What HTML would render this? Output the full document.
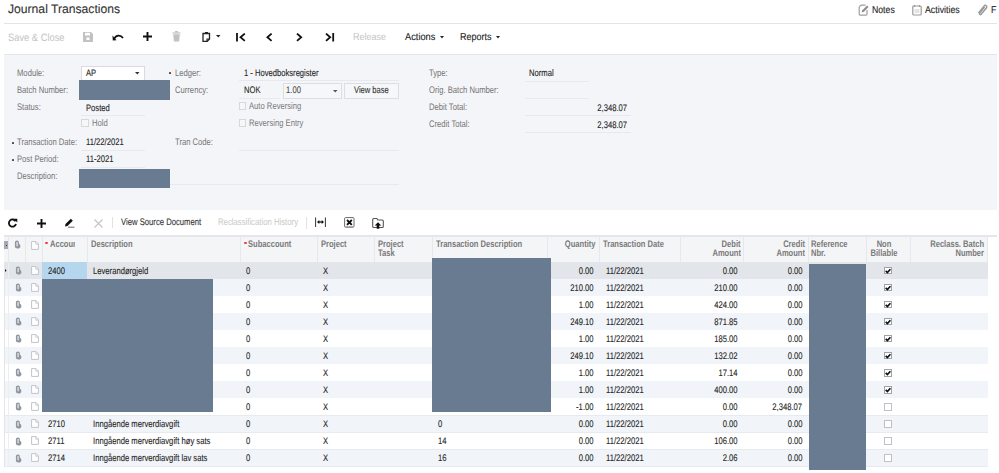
<!DOCTYPE html><html><head><meta charset="utf-8"><style>
html,body{margin:0;padding:0;}
body{width:999px;height:473px;overflow:hidden;position:relative;background:#fff;font-family:"Liberation Sans",sans-serif;text-rendering:geometricPrecision;}
.t{position:absolute;white-space:nowrap;line-height:1;transform-origin:0 0;}
.t.r{transform-origin:100% 0;text-align:right;}
.t.c{transform-origin:50% 0;text-align:center;}
.b{position:absolute;}
</style></head><body>
<div class="t" style="left:8.00px;top:3.08px;font-size:12.4px;color:#333;font-weight:normal;transform:scale(0.98,1.0);-webkit-text-stroke:0.1px currentColor;transform-origin:0 10.50px">Journal Transactions</div>
<div class="b" style="left:4.00px;top:23.00px;width:993.00px;height:1.00px;background:#e2e4e7;"></div>
<div class="t" style="left:871.60px;top:5.95px;font-size:10px;color:#222;font-weight:normal;transform:scale(0.87,1.0);-webkit-text-stroke:0.1px currentColor;transform-origin:0 8.46px">Notes</div>
<div class="t" style="left:925.00px;top:5.95px;font-size:10px;color:#222;font-weight:normal;transform:scale(0.88,1.0);-webkit-text-stroke:0.1px currentColor;transform-origin:0 8.46px">Activities</div>
<div class="t" style="left:991.00px;top:5.95px;font-size:10px;color:#222;font-weight:normal;transform:scale(0.88,1.0);-webkit-text-stroke:0.1px currentColor;transform-origin:0 8.46px">F</div>
<svg class="b" style="left:858px;top:4px" width="11" height="12" viewBox="0 0 11 12"><path d="M3 1.2h4.5M1.2 3v7.3a0.8 0.8 0 0 0 0.8 0.8h6.2a0.8 0.8 0 0 0 0.8-0.8v-4.3M1.2 3l1.8-1.8" fill="none" stroke="#a0a0a0" stroke-width="1.2"/><path d="M3.6 8.6l0.8-2.4 4.6-4.8 1.5 1.5-4.6 4.8z" fill="#8a8a8a"/></svg>
<svg class="b" style="left:912px;top:4px" width="10" height="12" viewBox="0 0 10 12"><rect x="0.8" y="2" width="8.4" height="9" rx="1" fill="none" stroke="#9a9a9a" stroke-width="1.2"/><path d="M2.5 1v2M7.5 1v2" stroke="#9a9a9a" stroke-width="1.2"/><path d="M2.5 6h5M2.5 8h5" stroke="#bbb" stroke-width="0.8"/></svg>
<svg class="b" style="left:977px;top:4px" width="11" height="12" viewBox="0 0 11 12"><path d="M2.5 10 L8.5 2.5 a1.6 1.6 0 0 1 2.2 2 L5 11.5 a1 1 0 0 1-1.5-1.2 L8.5 4" fill="none" stroke="#9a9a9a" stroke-width="1.5" transform="translate(-1,-1)"/></svg>
<div class="t" style="left:7.50px;top:32.61px;font-size:10.6px;color:#c4c4c4;font-weight:normal;transform:scale(0.88,1.0);transform-origin:0 8.97px">Save &amp; Close</div>
<svg class="b" style="left:83px;top:32px" width="10" height="10" viewBox="0 0 10 10"><path d="M0 0h8l2 2v8H0z" fill="#c2c2c2"/><rect x="2" y="0.8" width="5" height="2.7" fill="#fff"/><rect x="3.5" y="5.5" width="3" height="2.5" fill="#fff"/></svg>
<svg class="b" style="left:112px;top:33px" width="12" height="8" viewBox="0 0 12 8"><path d="M2.5 5.5 C4 2 8.5 1.5 11 5" fill="none" stroke="#111" stroke-width="1.8"/><path d="M0.5 2.5 L4.5 7.2 L0.8 7.5 z" fill="#111"/></svg>
<svg class="b" style="left:143px;top:32px" width="9" height="9" viewBox="0 0 9 9"><path d="M4.5 0v9M0 4.5h9" stroke="#111" stroke-width="1.9"/></svg>
<svg class="b" style="left:172px;top:31px" width="9" height="11" viewBox="0 0 9 11"><path d="M0.5 2h8" stroke="#c2c2c2" stroke-width="1.2"/><rect x="3" y="0" width="3" height="1.5" fill="#c2c2c2"/><path d="M1.2 3.2h6.6l-0.7 7.3H1.9z" fill="#c2c2c2"/></svg>
<svg class="b" style="left:202px;top:31px" width="9" height="11" viewBox="0 0 9 11"><path d="M1 2.5h6.5v5.5l-2.5 2.5H1z" fill="none" stroke="#222" stroke-width="1.3"/><rect x="3" y="1" width="3" height="2" fill="#222"/><path d="M5 10.5v-2.5h2.5" fill="none" stroke="#222" stroke-width="1.1"/></svg>
<svg class="b" style="left:215.5px;top:35px" width="5" height="3" viewBox="0 0 5 3"><path d="M0 0h4.5L2.25 2.5z" fill="#222"/></svg>
<svg class="b" style="left:236px;top:33px" width="10" height="9" viewBox="0 0 10 9"><path d="M1 0v8.5" stroke="#111" stroke-width="1.8"/><path d="M8.8 0.6L4.5 4.25 8.8 7.9" fill="none" stroke="#111" stroke-width="1.8"/></svg>
<svg class="b" style="left:266px;top:33px" width="7" height="9" viewBox="0 0 7 9"><path d="M5.6 0.6L1.4 4.25 5.6 7.9" fill="none" stroke="#111" stroke-width="1.8"/></svg>
<svg class="b" style="left:296px;top:33px" width="7" height="9" viewBox="0 0 7 9"><path d="M1 0.6L5.2 4.25 1 7.9" fill="none" stroke="#111" stroke-width="1.8"/></svg>
<svg class="b" style="left:325px;top:33px" width="10" height="9" viewBox="0 0 10 9"><path d="M1 0.6L5.2 4.25 1 7.9" fill="none" stroke="#111" stroke-width="1.8"/><path d="M8.2 0v8.5" stroke="#111" stroke-width="1.8"/></svg>
<div class="t" style="left:353.30px;top:33.15px;font-size:10px;color:#c4c4c4;font-weight:normal;transform:scale(0.9,1.0);transform-origin:0 8.46px">Release</div>
<div class="t" style="left:405.20px;top:33.15px;font-size:10px;color:#222;font-weight:normal;transform:scale(0.927,1.0);-webkit-text-stroke:0.1px currentColor;transform-origin:0 8.46px">Actions</div>
<svg class="b" style="left:440px;top:36px" width="4" height="3" viewBox="0 0 4 3"><path d="M0 0h4L2 2.5z" fill="#222"/></svg>
<div class="t" style="left:459.50px;top:33.15px;font-size:10px;color:#222;font-weight:normal;transform:scale(0.9,1.0);-webkit-text-stroke:0.1px currentColor;transform-origin:0 8.46px">Reports</div>
<svg class="b" style="left:496px;top:36px" width="4" height="3" viewBox="0 0 4 3"><path d="M0 0h4L2 2.5z" fill="#222"/></svg>
<div class="b" style="left:4.00px;top:54.00px;width:993.00px;height:1.00px;background:#e4e6e9;"></div>
<div class="b" style="left:4.00px;top:55.00px;width:993.00px;height:155.00px;background:#f4f5f8;"></div>
<div class="t" style="left:17.30px;top:68.66px;font-size:9px;color:#747474;font-weight:normal;transform:scale(0.85,1.06);transform-origin:0 7.62px">Module:</div>
<div class="t" style="left:17.30px;top:85.86px;font-size:9px;color:#747474;font-weight:normal;transform:scale(0.85,1.06);transform-origin:0 7.62px">Batch Number:</div>
<div class="t" style="left:17.30px;top:102.86px;font-size:9px;color:#747474;font-weight:normal;transform:scale(0.85,1.06);transform-origin:0 7.62px">Status:</div>
<div class="t" style="left:17.40px;top:138.16px;font-size:9px;color:#747474;font-weight:normal;transform:scale(0.85,1.06);transform-origin:0 7.62px">Transaction Date:</div>
<div class="t" style="left:17.40px;top:154.85px;font-size:9px;color:#747474;font-weight:normal;transform:scale(0.85,1.06);transform-origin:0 7.62px">Post Period:</div>
<div class="t" style="left:17.40px;top:171.85px;font-size:9px;color:#747474;font-weight:normal;transform:scale(0.85,1.06);transform-origin:0 7.62px">Description:</div>
<div class="b" style="left:11.50px;top:141.50px;width:2px;height:2px;border-radius:0.6px;background:#4a4a4a"></div>
<div class="b" style="left:11.50px;top:158.50px;width:2px;height:2px;border-radius:0.6px;background:#4a4a4a"></div>
<div class="b" style="left:81.00px;top:66.00px;width:64.00px;height:14.50px;background:#fff;border:1px solid #d9dbde;box-sizing:border-box;"></div>
<div class="t" style="left:85.50px;top:69.06px;font-size:9px;color:#1e1e1e;font-weight:normal;transform:scale(0.85,1.06);-webkit-text-stroke:0.1px currentColor;transform-origin:0 7.62px">AP</div>
<svg class="b" style="left:135px;top:72px" width="5" height="3" viewBox="0 0 5 3"><path d="M0 0h4.5L2.25 2.5z" fill="#333"/></svg>
<div class="b" style="left:79.00px;top:80.00px;width:91.00px;height:20.00px;background:#687b90;"></div>
<div class="t" style="left:85.60px;top:103.86px;font-size:9px;color:#1e1e1e;font-weight:normal;transform:scale(0.85,1.06);-webkit-text-stroke:0.1px currentColor;transform-origin:0 7.62px">Posted</div>
<div class="b" style="left:81.00px;top:115.00px;width:64.00px;height:1.00px;background:#e7e9ec;"></div>
<div class="b" style="left:81.00px;top:119.30px;width:8.00px;height:7.70px;background:#f7f7f8;border:1px solid #d6d8db;box-sizing:border-box;"></div>
<div class="t" style="left:91.90px;top:118.86px;font-size:9px;color:#7a7a7a;font-weight:normal;transform:scale(0.85,1.06);transform-origin:0 7.62px">Hold</div>
<div class="t" style="left:86.20px;top:138.35px;font-size:9px;color:#1e1e1e;font-weight:normal;transform:scale(0.85,1.06);-webkit-text-stroke:0.1px currentColor;transform-origin:0 7.62px">11/22/2021</div>
<div class="b" style="left:81.00px;top:150.00px;width:64.00px;height:1.00px;background:#e7e9ec;"></div>
<div class="t" style="left:86.00px;top:154.85px;font-size:9px;color:#1e1e1e;font-weight:normal;transform:scale(0.85,1.06);-webkit-text-stroke:0.1px currentColor;transform-origin:0 7.62px">11-2021</div>
<div class="b" style="left:81.00px;top:166.50px;width:64.00px;height:1.00px;background:#e7e9ec;"></div>
<div class="b" style="left:79.00px;top:168.60px;width:91.00px;height:19.20px;background:#687b90;"></div>
<div class="b" style="left:168.70px;top:72.20px;width:2px;height:2px;border-radius:0.6px;background:#4a4a4a"></div>
<div class="t" style="left:174.80px;top:68.66px;font-size:9px;color:#747474;font-weight:normal;transform:scale(0.85,1.06);transform-origin:0 7.62px">Ledger:</div>
<div class="t" style="left:174.80px;top:85.86px;font-size:9px;color:#747474;font-weight:normal;transform:scale(0.85,1.06);transform-origin:0 7.62px">Currency:</div>
<div class="t" style="left:175.00px;top:137.85px;font-size:9px;color:#747474;font-weight:normal;transform:scale(0.85,1.06);transform-origin:0 7.62px">Tran Code:</div>
<div class="t" style="left:243.80px;top:68.86px;font-size:9px;color:#1e1e1e;font-weight:normal;transform:scale(0.846,1.06);-webkit-text-stroke:0.1px currentColor;transform-origin:0 7.62px">1 - Hovedboksregister</div>
<div class="b" style="left:239.00px;top:80.00px;width:160.00px;height:1.00px;background:#e7e9ec;"></div>
<div class="t" style="left:243.50px;top:86.16px;font-size:9px;color:#1e1e1e;font-weight:normal;transform:scale(0.85,1.06);-webkit-text-stroke:0.1px currentColor;transform-origin:0 7.62px">NOK</div>
<div class="b" style="left:239.00px;top:98.00px;width:40.50px;height:1.00px;background:#e7e9ec;"></div>
<div class="b" style="left:283.00px;top:83.30px;width:58.60px;height:15.30px;background:#f6f7f9;border:1px solid #dcdee1;box-sizing:border-box;"></div>
<div class="t" style="left:285.50px;top:86.16px;font-size:9px;color:#4a4a4a;font-weight:normal;transform:scale(0.85,1.06);-webkit-text-stroke:0.1px currentColor;transform-origin:0 7.62px">1.00</div>
<svg class="b" style="left:333px;top:89.5px" width="5" height="3" viewBox="0 0 5 3"><path d="M0 0h4.5L2.25 2.5z" fill="#555"/></svg>
<div class="b" style="left:344.30px;top:83.30px;width:54.70px;height:15.30px;background:#f6f7f9;border:1px solid #dcdee1;box-sizing:border-box;"></div>
<div class="t" style="left:354.30px;top:86.16px;font-size:9px;color:#333;font-weight:normal;transform:scale(0.84,1.06);-webkit-text-stroke:0.1px currentColor;transform-origin:0 7.62px">View base</div>
<div class="b" style="left:238.60px;top:102.30px;width:7.60px;height:7.50px;background:#f7f7f8;border:1px solid #d6d8db;box-sizing:border-box;"></div>
<div class="t" style="left:249.40px;top:102.36px;font-size:9px;color:#7a7a7a;font-weight:normal;transform:scale(0.85,1.06);transform-origin:0 7.62px">Auto Reversing</div>
<div class="b" style="left:238.60px;top:119.30px;width:7.60px;height:7.50px;background:#f7f7f8;border:1px solid #d6d8db;box-sizing:border-box;"></div>
<div class="t" style="left:249.40px;top:118.86px;font-size:9px;color:#7a7a7a;font-weight:normal;transform:scale(0.85,1.06);transform-origin:0 7.62px">Reversing Entry</div>
<div class="b" style="left:239.00px;top:150.00px;width:160.00px;height:1.00px;background:#e7e9ec;"></div>
<div class="b" style="left:170.00px;top:184.00px;width:229.00px;height:1.00px;background:#e7e9ec;"></div>
<div class="t" style="left:428.70px;top:68.66px;font-size:9px;color:#747474;font-weight:normal;transform:scale(0.85,1.06);transform-origin:0 7.62px">Type:</div>
<div class="t" style="left:428.70px;top:85.66px;font-size:9px;color:#747474;font-weight:normal;transform:scale(0.85,1.06);transform-origin:0 7.62px">Orig. Batch Number:</div>
<div class="t" style="left:428.70px;top:102.86px;font-size:9px;color:#747474;font-weight:normal;transform:scale(0.85,1.06);transform-origin:0 7.62px">Debit Total:</div>
<div class="t" style="left:428.70px;top:119.86px;font-size:9px;color:#747474;font-weight:normal;transform:scale(0.85,1.06);transform-origin:0 7.62px">Credit Total:</div>
<div class="t" style="left:529.40px;top:68.86px;font-size:9px;color:#1e1e1e;font-weight:normal;transform:scale(0.85,1.06);-webkit-text-stroke:0.1px currentColor;transform-origin:0 7.62px">Normal</div>
<div class="b" style="left:524.60px;top:80.50px;width:64.40px;height:1.00px;background:#e7e9ec;"></div>
<div class="b" style="left:524.60px;top:98.00px;width:64.40px;height:1.00px;background:#e7e9ec;"></div>
<div class="t r" style="right:372.20px;top:103.86px;font-size:9px;color:#1e1e1e;font-weight:normal;transform:scale(0.85,1.06);-webkit-text-stroke:0.1px currentColor;transform-origin:100% 7.62px">2,348.07</div>
<div class="b" style="left:524.60px;top:115.30px;width:106.40px;height:1.00px;background:#e7e9ec;"></div>
<div class="t r" style="right:372.20px;top:120.86px;font-size:9px;color:#1e1e1e;font-weight:normal;transform:scale(0.85,1.06);-webkit-text-stroke:0.1px currentColor;transform-origin:100% 7.62px">2,348.07</div>
<div class="b" style="left:524.60px;top:132.30px;width:106.40px;height:1.00px;background:#e7e9ec;"></div>
<svg class="b" style="left:8px;top:218px" width="10" height="10" viewBox="0 0 10 10"><path d="M7.6 3.2 A3.6 3.6 0 1 0 8 6" fill="none" stroke="#111" stroke-width="1.8"/><path d="M5.5 0.8 L9.3 0.8 L9.3 4.6 z" fill="#111"/></svg>
<svg class="b" style="left:37px;top:218.5px" width="9" height="9" viewBox="0 0 9 9"><path d="M4.5 0v9M0 4.5h9" stroke="#111" stroke-width="1.9"/></svg>
<svg class="b" style="left:64px;top:218px" width="11" height="10" viewBox="0 0 11 10"><path d="M1 8.5 L1.5 6 L6.8 0.8 L8.8 2.8 L3.5 8z" fill="#111"/><path d="M4 9.2h6.5" stroke="#555" stroke-width="0.9"/></svg>
<svg class="b" style="left:93.5px;top:218.5px" width="9" height="9" viewBox="0 0 9 9"><path d="M0.5 0.5L8.5 8.5M8.5 0.5L0.5 8.5" stroke="#c4c4c4" stroke-width="1.1"/></svg>
<div class="b" style="left:111.50px;top:216.70px;width:1.00px;height:11.70px;background:#e2e2e2;"></div>
<div class="t" style="left:120.90px;top:217.95px;font-size:9px;color:#333;font-weight:normal;transform:scale(0.854,1.06);-webkit-text-stroke:0.1px currentColor;transform-origin:0 7.62px">View Source Document</div>
<div class="t" style="left:217.60px;top:217.95px;font-size:9px;color:#c8c8c8;font-weight:normal;transform:scale(0.86,1.06);transform-origin:0 7.62px">Reclassification History</div>
<div class="b" style="left:305.80px;top:216.70px;width:1.00px;height:11.90px;background:#e2e2e2;"></div>
<svg class="b" style="left:315px;top:217px" width="11" height="10" viewBox="0 0 11 10"><path d="M0.6 0.5v9.5M10.4 0.5v9.5" stroke="#333" stroke-width="1"/><path d="M3 5h5" stroke="#111" stroke-width="1.3"/><path d="M2 5l2.3-2v4zM9 5l-2.3-2v4z" fill="#111"/></svg>
<svg class="b" style="left:343.5px;top:216.8px" width="11" height="11" viewBox="0 0 11 11"><rect x="0.6" y="0.6" width="9.4" height="9.6" rx="1" fill="none" stroke="#6a6a6a" stroke-width="1"/><path d="M1 9.6h8.6" stroke="#aaa" stroke-width="1"/><path d="M3 3l4.8 4.8M7.8 3l-4.8 4.8" stroke="#111" stroke-width="1.9"/></svg>
<svg class="b" style="left:371.5px;top:217px" width="12" height="12" viewBox="0 0 12 12"><path d="M0.7 3v6.5a1 1 0 0 0 1 1h8.6a1 1 0 0 0 1-1v-5.5a1 1 0 0 0-1-1h-4.5l-1-1.5h-3.1a1 1 0 0 0-1 1z" fill="none" stroke="#555" stroke-width="1.1"/><path d="M6 5.2l3.3 3.2h-2v3.3h-2.6v-3.3h-2z" fill="#111"/></svg>
<div class="b" style="left:4.00px;top:235.00px;width:984.00px;height:27.00px;background:#f4f5f7;"></div>
<div class="b" style="left:4.00px;top:235.00px;width:993.00px;height:2.00px;background:#e4e6e9;"></div>
<div class="b" style="left:4.00px;top:261.50px;width:984.00px;height:1.00px;background:#e6e8eb;"></div>
<div class="b" style="left:7.90px;top:236.00px;width:1.00px;height:25.50px;background:#e6e8eb;"></div>
<div class="b" style="left:24.70px;top:236.00px;width:1.00px;height:25.50px;background:#e6e8eb;"></div>
<div class="b" style="left:41.50px;top:236.00px;width:1.00px;height:25.50px;background:#e6e8eb;"></div>
<div class="b" style="left:86.60px;top:236.00px;width:1.00px;height:25.50px;background:#e6e8eb;"></div>
<div class="b" style="left:239.50px;top:236.00px;width:1.00px;height:25.50px;background:#e6e8eb;"></div>
<div class="b" style="left:316.50px;top:236.00px;width:1.00px;height:25.50px;background:#e6e8eb;"></div>
<div class="b" style="left:374.00px;top:236.00px;width:1.00px;height:25.50px;background:#e6e8eb;"></div>
<div class="b" style="left:431.50px;top:236.00px;width:1.00px;height:25.50px;background:#e6e8eb;"></div>
<div class="b" style="left:547.00px;top:236.00px;width:1.00px;height:25.50px;background:#e6e8eb;"></div>
<div class="b" style="left:599.00px;top:236.00px;width:1.00px;height:25.50px;background:#e6e8eb;"></div>
<div class="b" style="left:679.50px;top:236.00px;width:1.00px;height:25.50px;background:#e6e8eb;"></div>
<div class="b" style="left:743.40px;top:236.00px;width:1.00px;height:25.50px;background:#e6e8eb;"></div>
<div class="b" style="left:808.20px;top:236.00px;width:1.00px;height:25.50px;background:#e6e8eb;"></div>
<div class="b" style="left:866.00px;top:236.00px;width:1.00px;height:25.50px;background:#e6e8eb;"></div>
<div class="b" style="left:910.10px;top:236.00px;width:1.00px;height:25.50px;background:#e6e8eb;"></div>
<div class="b" style="left:987.10px;top:236.00px;width:1.00px;height:25.50px;background:#e6e8eb;"></div>
<div class="b" style="left:45.30px;top:241.50px;width:3px;height:2.6px;border-radius:1.3px;background:#ee4040"></div>
<div class="b" style="left:49px;top:236px;width:26px;height:20px;overflow:hidden">
<div class="t" style="left:0.80px;top:4.16px;font-size:9px;color:#7a7a7a;font-weight:bold;transform:scale(0.84,1.06);transform-origin:0 7.62px">Account</div>
</div>
<div class="t" style="left:90.50px;top:240.16px;font-size:9px;color:#7a7a7a;font-weight:bold;transform:scale(0.84,1.06);transform-origin:0 7.62px">Description</div>
<div class="b" style="left:243.60px;top:241.50px;width:3px;height:2.6px;border-radius:1.3px;background:#ee4040"></div>
<div class="t" style="left:248.00px;top:240.16px;font-size:9px;color:#7a7a7a;font-weight:bold;transform:scale(0.84,1.06);transform-origin:0 7.62px">Subaccount</div>
<div class="t" style="left:320.50px;top:240.16px;font-size:9px;color:#7a7a7a;font-weight:bold;transform:scale(0.84,1.06);transform-origin:0 7.62px">Project</div>
<div class="t" style="left:378.00px;top:239.85px;font-size:9px;color:#7a7a7a;font-weight:bold;transform:scale(0.84,1.06);transform-origin:0 7.62px">Project</div>
<div class="t" style="left:378.00px;top:248.60px;font-size:9px;color:#7a7a7a;font-weight:bold;transform:scale(0.84,1.06);transform-origin:0 7.62px">Task</div>
<div class="t" style="left:435.50px;top:240.16px;font-size:9px;color:#7a7a7a;font-weight:bold;transform:scale(0.84,1.06);transform-origin:0 7.62px">Transaction Description</div>
<div class="t r" style="right:403.00px;top:240.16px;font-size:9px;color:#7a7a7a;font-weight:bold;transform:scale(0.84,1.06);transform-origin:100% 7.62px">Quantity</div>
<div class="t" style="left:603.00px;top:240.16px;font-size:9px;color:#7a7a7a;font-weight:bold;transform:scale(0.84,1.06);transform-origin:0 7.62px">Transaction Date</div>
<div class="t r" style="right:258.20px;top:239.85px;font-size:9px;color:#7a7a7a;font-weight:bold;transform:scale(0.84,1.06);transform-origin:100% 7.62px">Debit</div>
<div class="t r" style="right:258.20px;top:248.60px;font-size:9px;color:#7a7a7a;font-weight:bold;transform:scale(0.84,1.06);transform-origin:100% 7.62px">Amount</div>
<div class="t r" style="right:194.20px;top:239.85px;font-size:9px;color:#7a7a7a;font-weight:bold;transform:scale(0.84,1.06);transform-origin:100% 7.62px">Credit</div>
<div class="t r" style="right:194.20px;top:248.60px;font-size:9px;color:#7a7a7a;font-weight:bold;transform:scale(0.84,1.06);transform-origin:100% 7.62px">Amount</div>
<div class="t" style="left:811.30px;top:239.85px;font-size:9px;color:#7a7a7a;font-weight:bold;transform:scale(0.84,1.06);transform-origin:0 7.62px">Reference</div>
<div class="t" style="left:811.30px;top:248.60px;font-size:9px;color:#7a7a7a;font-weight:bold;transform:scale(0.84,1.06);transform-origin:0 7.62px">Nbr.</div>
<div class="t c" style="left:783.50px;width:200px;top:239.85px;font-size:9px;color:#7a7a7a;font-weight:bold;transform:scale(0.84,1.06);transform-origin:50% 7.62px">Non</div>
<div class="t c" style="left:783.50px;width:200px;top:248.60px;font-size:9px;color:#7a7a7a;font-weight:bold;transform:scale(0.84,1.06);transform-origin:50% 7.62px">Billable</div>
<div class="t r" style="right:14.50px;top:239.85px;font-size:9px;color:#7a7a7a;font-weight:bold;transform:scale(0.84,1.06);transform-origin:100% 7.62px">Reclass. Batch</div>
<div class="t r" style="right:14.50px;top:248.60px;font-size:9px;color:#7a7a7a;font-weight:bold;transform:scale(0.84,1.06);transform-origin:100% 7.62px">Number</div>
<svg class="b" style="left:13.8px;top:240.2px" width="8" height="10" viewBox="0 0 8 10"><path d="M3 0.5 C1.6 0.5 0.9 1.4 0.9 2.8 V6.3 C0.9 7.6 2 8.6 3.6 8.6 C5.2 8.6 6.4 7.6 6.4 6.2 C6.4 4.8 5.6 3.9 4.9 3.7 V2.6 C4.9 1.3 4.3 0.5 3 0.5 Z" fill="#8f969f"/><path d="M2.5 2 L3.6 2 L3.6 6.2 L2.5 6.2 Z" fill="#f4f6f8"/></svg>
<svg class="b" style="left:30.5px;top:240.5px" width="8" height="9" viewBox="0 0 8 9"><path d="M0.6 0.6h4.4l2.4 2.4v5.4H0.6z" fill="#fff" stroke="#c0c4ca" stroke-width="1"/><path d="M4.8 0.6v2.6h2.6" fill="none" stroke="#c0c4ca" stroke-width="0.8"/></svg>
<div class="b" style="left:4.00px;top:241.00px;width:3.50px;height:8.00px;background:#a3aab4;"></div>
<div class="b" style="left:5.50px;top:244.50px;width:1.50px;height:1.50px;background:#2d3440;"></div>
<div class="b" style="left:4.00px;top:262.00px;width:984.00px;height:17.06px;background:#e2e5e9;"></div>
<div class="b" style="left:4.00px;top:278.56px;width:984.00px;height:1.00px;background:#e7eaee;"></div>
<div class="b" style="left:42.00px;top:262.00px;width:45.10px;height:17.06px;background:#b6d6ee;"></div>
<svg class="b" style="left:4px;top:268.0px" width="3" height="5" viewBox="0 0 3 5"><path d="M0 0L2.5 2.5 0 5z" fill="#111"/></svg>
<svg class="b" style="left:15px;top:266.0px" width="8" height="10" viewBox="0 0 8 10"><path d="M3 0.5 C1.6 0.5 0.9 1.4 0.9 2.8 V6.3 C0.9 7.6 2 8.6 3.6 8.6 C5.2 8.6 6.4 7.6 6.4 6.2 C6.4 4.8 5.6 3.9 4.9 3.7 V2.6 C4.9 1.3 4.3 0.5 3 0.5 Z" fill="#8f969f"/><path d="M2.5 2 L3.6 2 L3.6 6.2 L2.5 6.2 Z" fill="#f4f6f8"/></svg>
<svg class="b" style="left:31px;top:265.6px" width="8" height="9" viewBox="0 0 8 9"><path d="M0.6 0.6h4.4l2.4 2.4v5.4H0.6z" fill="#fff" stroke="#c0c4ca" stroke-width="1"/><path d="M4.8 0.6v2.6h2.6" fill="none" stroke="#c0c4ca" stroke-width="0.8"/></svg>
<div class="t" style="left:48.00px;top:266.75px;font-size:9px;color:#1e1e1e;font-weight:normal;transform:scale(0.85,1.06);-webkit-text-stroke:0.1px currentColor;transform-origin:0 7.62px">2400</div>
<div class="t" style="left:92.50px;top:266.75px;font-size:9px;color:#1e1e1e;font-weight:normal;transform:scale(0.85,1.06);-webkit-text-stroke:0.1px currentColor;transform-origin:0 7.62px">Leverandørgjeld</div>
<div class="t" style="left:245.50px;top:266.75px;font-size:9px;color:#1e1e1e;font-weight:normal;transform:scale(0.85,1.06);-webkit-text-stroke:0.1px currentColor;transform-origin:0 7.62px">0</div>
<div class="t" style="left:322.50px;top:266.75px;font-size:9px;color:#1e1e1e;font-weight:normal;transform:scale(0.85,1.06);-webkit-text-stroke:0.1px currentColor;transform-origin:0 7.62px">X</div>
<div class="t r" style="right:405.00px;top:266.75px;font-size:9px;color:#1e1e1e;font-weight:normal;transform:scale(0.85,1.06);-webkit-text-stroke:0.1px currentColor;transform-origin:100% 7.62px">0.00</div>
<div class="t" style="left:606.00px;top:266.75px;font-size:9px;color:#1e1e1e;font-weight:normal;transform:scale(0.85,1.06);-webkit-text-stroke:0.1px currentColor;transform-origin:0 7.62px">11/22/2021</div>
<div class="t r" style="right:261.00px;top:266.75px;font-size:9px;color:#1e1e1e;font-weight:normal;transform:scale(0.85,1.06);-webkit-text-stroke:0.1px currentColor;transform-origin:100% 7.62px">0.00</div>
<div class="t r" style="right:196.80px;top:266.75px;font-size:9px;color:#1e1e1e;font-weight:normal;transform:scale(0.85,1.06);-webkit-text-stroke:0.1px currentColor;transform-origin:100% 7.62px">0.00</div>
<div class="b" style="left:884.30px;top:266.50px;width:7.70px;height:7.70px;background:#fff;border:1px solid #9ea2a8;box-sizing:border-box;"></div>
<svg class="b" style="left:884.3px;top:266.5px" width="8" height="8" viewBox="0 0 8 8"><path d="M1.7 3.9L3.4 5.6 6.4 2.3" fill="none" stroke="#111" stroke-width="1.7"/></svg>
<div class="b" style="left:4.00px;top:279.06px;width:984.00px;height:17.06px;background:#f1f4f8;"></div>
<div class="b" style="left:4.00px;top:295.62px;width:984.00px;height:1.00px;background:#e7eaee;"></div>
<svg class="b" style="left:15px;top:283.06px" width="8" height="10" viewBox="0 0 8 10"><path d="M3 0.5 C1.6 0.5 0.9 1.4 0.9 2.8 V6.3 C0.9 7.6 2 8.6 3.6 8.6 C5.2 8.6 6.4 7.6 6.4 6.2 C6.4 4.8 5.6 3.9 4.9 3.7 V2.6 C4.9 1.3 4.3 0.5 3 0.5 Z" fill="#8f969f"/><path d="M2.5 2 L3.6 2 L3.6 6.2 L2.5 6.2 Z" fill="#f4f6f8"/></svg>
<svg class="b" style="left:31px;top:282.66px" width="8" height="9" viewBox="0 0 8 9"><path d="M0.6 0.6h4.4l2.4 2.4v5.4H0.6z" fill="#fff" stroke="#c0c4ca" stroke-width="1"/><path d="M4.8 0.6v2.6h2.6" fill="none" stroke="#c0c4ca" stroke-width="0.8"/></svg>
<div class="t" style="left:48.00px;top:283.81px;font-size:9px;color:#1e1e1e;font-weight:normal;transform:scale(0.85,1.06);-webkit-text-stroke:0.1px currentColor;transform-origin:0 7.62px"></div>
<div class="t" style="left:92.50px;top:283.81px;font-size:9px;color:#1e1e1e;font-weight:normal;transform:scale(0.85,1.06);-webkit-text-stroke:0.1px currentColor;transform-origin:0 7.62px"></div>
<div class="t" style="left:245.50px;top:283.81px;font-size:9px;color:#1e1e1e;font-weight:normal;transform:scale(0.85,1.06);-webkit-text-stroke:0.1px currentColor;transform-origin:0 7.62px">0</div>
<div class="t" style="left:322.50px;top:283.81px;font-size:9px;color:#1e1e1e;font-weight:normal;transform:scale(0.85,1.06);-webkit-text-stroke:0.1px currentColor;transform-origin:0 7.62px">X</div>
<div class="t r" style="right:405.00px;top:283.81px;font-size:9px;color:#1e1e1e;font-weight:normal;transform:scale(0.85,1.06);-webkit-text-stroke:0.1px currentColor;transform-origin:100% 7.62px">210.00</div>
<div class="t" style="left:606.00px;top:283.81px;font-size:9px;color:#1e1e1e;font-weight:normal;transform:scale(0.85,1.06);-webkit-text-stroke:0.1px currentColor;transform-origin:0 7.62px">11/22/2021</div>
<div class="t r" style="right:261.00px;top:283.81px;font-size:9px;color:#1e1e1e;font-weight:normal;transform:scale(0.85,1.06);-webkit-text-stroke:0.1px currentColor;transform-origin:100% 7.62px">210.00</div>
<div class="t r" style="right:196.80px;top:283.81px;font-size:9px;color:#1e1e1e;font-weight:normal;transform:scale(0.85,1.06);-webkit-text-stroke:0.1px currentColor;transform-origin:100% 7.62px">0.00</div>
<div class="b" style="left:884.30px;top:283.56px;width:7.70px;height:7.70px;background:#fff;border:1px solid #9ea2a8;box-sizing:border-box;"></div>
<svg class="b" style="left:884.3px;top:283.56px" width="8" height="8" viewBox="0 0 8 8"><path d="M1.7 3.9L3.4 5.6 6.4 2.3" fill="none" stroke="#111" stroke-width="1.7"/></svg>
<div class="b" style="left:4.00px;top:296.12px;width:984.00px;height:17.06px;background:#ffffff;"></div>
<div class="b" style="left:4.00px;top:312.68px;width:984.00px;height:1.00px;background:#e7eaee;"></div>
<svg class="b" style="left:15px;top:300.12px" width="8" height="10" viewBox="0 0 8 10"><path d="M3 0.5 C1.6 0.5 0.9 1.4 0.9 2.8 V6.3 C0.9 7.6 2 8.6 3.6 8.6 C5.2 8.6 6.4 7.6 6.4 6.2 C6.4 4.8 5.6 3.9 4.9 3.7 V2.6 C4.9 1.3 4.3 0.5 3 0.5 Z" fill="#8f969f"/><path d="M2.5 2 L3.6 2 L3.6 6.2 L2.5 6.2 Z" fill="#f4f6f8"/></svg>
<svg class="b" style="left:31px;top:299.72px" width="8" height="9" viewBox="0 0 8 9"><path d="M0.6 0.6h4.4l2.4 2.4v5.4H0.6z" fill="#fff" stroke="#c0c4ca" stroke-width="1"/><path d="M4.8 0.6v2.6h2.6" fill="none" stroke="#c0c4ca" stroke-width="0.8"/></svg>
<div class="t" style="left:48.00px;top:300.88px;font-size:9px;color:#1e1e1e;font-weight:normal;transform:scale(0.85,1.06);-webkit-text-stroke:0.1px currentColor;transform-origin:0 7.62px"></div>
<div class="t" style="left:92.50px;top:300.88px;font-size:9px;color:#1e1e1e;font-weight:normal;transform:scale(0.85,1.06);-webkit-text-stroke:0.1px currentColor;transform-origin:0 7.62px"></div>
<div class="t" style="left:245.50px;top:300.88px;font-size:9px;color:#1e1e1e;font-weight:normal;transform:scale(0.85,1.06);-webkit-text-stroke:0.1px currentColor;transform-origin:0 7.62px">0</div>
<div class="t" style="left:322.50px;top:300.88px;font-size:9px;color:#1e1e1e;font-weight:normal;transform:scale(0.85,1.06);-webkit-text-stroke:0.1px currentColor;transform-origin:0 7.62px">X</div>
<div class="t r" style="right:405.00px;top:300.88px;font-size:9px;color:#1e1e1e;font-weight:normal;transform:scale(0.85,1.06);-webkit-text-stroke:0.1px currentColor;transform-origin:100% 7.62px">1.00</div>
<div class="t" style="left:606.00px;top:300.88px;font-size:9px;color:#1e1e1e;font-weight:normal;transform:scale(0.85,1.06);-webkit-text-stroke:0.1px currentColor;transform-origin:0 7.62px">11/22/2021</div>
<div class="t r" style="right:261.00px;top:300.88px;font-size:9px;color:#1e1e1e;font-weight:normal;transform:scale(0.85,1.06);-webkit-text-stroke:0.1px currentColor;transform-origin:100% 7.62px">424.00</div>
<div class="t r" style="right:196.80px;top:300.88px;font-size:9px;color:#1e1e1e;font-weight:normal;transform:scale(0.85,1.06);-webkit-text-stroke:0.1px currentColor;transform-origin:100% 7.62px">0.00</div>
<div class="b" style="left:884.30px;top:300.62px;width:7.70px;height:7.70px;background:#fff;border:1px solid #9ea2a8;box-sizing:border-box;"></div>
<svg class="b" style="left:884.3px;top:300.62px" width="8" height="8" viewBox="0 0 8 8"><path d="M1.7 3.9L3.4 5.6 6.4 2.3" fill="none" stroke="#111" stroke-width="1.7"/></svg>
<div class="b" style="left:4.00px;top:313.18px;width:984.00px;height:17.06px;background:#f1f4f8;"></div>
<div class="b" style="left:4.00px;top:329.74px;width:984.00px;height:1.00px;background:#e7eaee;"></div>
<svg class="b" style="left:15px;top:317.18px" width="8" height="10" viewBox="0 0 8 10"><path d="M3 0.5 C1.6 0.5 0.9 1.4 0.9 2.8 V6.3 C0.9 7.6 2 8.6 3.6 8.6 C5.2 8.6 6.4 7.6 6.4 6.2 C6.4 4.8 5.6 3.9 4.9 3.7 V2.6 C4.9 1.3 4.3 0.5 3 0.5 Z" fill="#8f969f"/><path d="M2.5 2 L3.6 2 L3.6 6.2 L2.5 6.2 Z" fill="#f4f6f8"/></svg>
<svg class="b" style="left:31px;top:316.78000000000003px" width="8" height="9" viewBox="0 0 8 9"><path d="M0.6 0.6h4.4l2.4 2.4v5.4H0.6z" fill="#fff" stroke="#c0c4ca" stroke-width="1"/><path d="M4.8 0.6v2.6h2.6" fill="none" stroke="#c0c4ca" stroke-width="0.8"/></svg>
<div class="t" style="left:48.00px;top:317.94px;font-size:9px;color:#1e1e1e;font-weight:normal;transform:scale(0.85,1.06);-webkit-text-stroke:0.1px currentColor;transform-origin:0 7.62px"></div>
<div class="t" style="left:92.50px;top:317.94px;font-size:9px;color:#1e1e1e;font-weight:normal;transform:scale(0.85,1.06);-webkit-text-stroke:0.1px currentColor;transform-origin:0 7.62px"></div>
<div class="t" style="left:245.50px;top:317.94px;font-size:9px;color:#1e1e1e;font-weight:normal;transform:scale(0.85,1.06);-webkit-text-stroke:0.1px currentColor;transform-origin:0 7.62px">0</div>
<div class="t" style="left:322.50px;top:317.94px;font-size:9px;color:#1e1e1e;font-weight:normal;transform:scale(0.85,1.06);-webkit-text-stroke:0.1px currentColor;transform-origin:0 7.62px">X</div>
<div class="t r" style="right:405.00px;top:317.94px;font-size:9px;color:#1e1e1e;font-weight:normal;transform:scale(0.85,1.06);-webkit-text-stroke:0.1px currentColor;transform-origin:100% 7.62px">249.10</div>
<div class="t" style="left:606.00px;top:317.94px;font-size:9px;color:#1e1e1e;font-weight:normal;transform:scale(0.85,1.06);-webkit-text-stroke:0.1px currentColor;transform-origin:0 7.62px">11/22/2021</div>
<div class="t r" style="right:261.00px;top:317.94px;font-size:9px;color:#1e1e1e;font-weight:normal;transform:scale(0.85,1.06);-webkit-text-stroke:0.1px currentColor;transform-origin:100% 7.62px">871.85</div>
<div class="t r" style="right:196.80px;top:317.94px;font-size:9px;color:#1e1e1e;font-weight:normal;transform:scale(0.85,1.06);-webkit-text-stroke:0.1px currentColor;transform-origin:100% 7.62px">0.00</div>
<div class="b" style="left:884.30px;top:317.68px;width:7.70px;height:7.70px;background:#fff;border:1px solid #9ea2a8;box-sizing:border-box;"></div>
<svg class="b" style="left:884.3px;top:317.68px" width="8" height="8" viewBox="0 0 8 8"><path d="M1.7 3.9L3.4 5.6 6.4 2.3" fill="none" stroke="#111" stroke-width="1.7"/></svg>
<div class="b" style="left:4.00px;top:330.24px;width:984.00px;height:17.06px;background:#ffffff;"></div>
<div class="b" style="left:4.00px;top:346.80px;width:984.00px;height:1.00px;background:#e7eaee;"></div>
<svg class="b" style="left:15px;top:334.24px" width="8" height="10" viewBox="0 0 8 10"><path d="M3 0.5 C1.6 0.5 0.9 1.4 0.9 2.8 V6.3 C0.9 7.6 2 8.6 3.6 8.6 C5.2 8.6 6.4 7.6 6.4 6.2 C6.4 4.8 5.6 3.9 4.9 3.7 V2.6 C4.9 1.3 4.3 0.5 3 0.5 Z" fill="#8f969f"/><path d="M2.5 2 L3.6 2 L3.6 6.2 L2.5 6.2 Z" fill="#f4f6f8"/></svg>
<svg class="b" style="left:31px;top:333.84000000000003px" width="8" height="9" viewBox="0 0 8 9"><path d="M0.6 0.6h4.4l2.4 2.4v5.4H0.6z" fill="#fff" stroke="#c0c4ca" stroke-width="1"/><path d="M4.8 0.6v2.6h2.6" fill="none" stroke="#c0c4ca" stroke-width="0.8"/></svg>
<div class="t" style="left:48.00px;top:335.00px;font-size:9px;color:#1e1e1e;font-weight:normal;transform:scale(0.85,1.06);-webkit-text-stroke:0.1px currentColor;transform-origin:0 7.62px"></div>
<div class="t" style="left:92.50px;top:335.00px;font-size:9px;color:#1e1e1e;font-weight:normal;transform:scale(0.85,1.06);-webkit-text-stroke:0.1px currentColor;transform-origin:0 7.62px"></div>
<div class="t" style="left:245.50px;top:335.00px;font-size:9px;color:#1e1e1e;font-weight:normal;transform:scale(0.85,1.06);-webkit-text-stroke:0.1px currentColor;transform-origin:0 7.62px">0</div>
<div class="t" style="left:322.50px;top:335.00px;font-size:9px;color:#1e1e1e;font-weight:normal;transform:scale(0.85,1.06);-webkit-text-stroke:0.1px currentColor;transform-origin:0 7.62px">X</div>
<div class="t r" style="right:405.00px;top:335.00px;font-size:9px;color:#1e1e1e;font-weight:normal;transform:scale(0.85,1.06);-webkit-text-stroke:0.1px currentColor;transform-origin:100% 7.62px">1.00</div>
<div class="t" style="left:606.00px;top:335.00px;font-size:9px;color:#1e1e1e;font-weight:normal;transform:scale(0.85,1.06);-webkit-text-stroke:0.1px currentColor;transform-origin:0 7.62px">11/22/2021</div>
<div class="t r" style="right:261.00px;top:335.00px;font-size:9px;color:#1e1e1e;font-weight:normal;transform:scale(0.85,1.06);-webkit-text-stroke:0.1px currentColor;transform-origin:100% 7.62px">185.00</div>
<div class="t r" style="right:196.80px;top:335.00px;font-size:9px;color:#1e1e1e;font-weight:normal;transform:scale(0.85,1.06);-webkit-text-stroke:0.1px currentColor;transform-origin:100% 7.62px">0.00</div>
<div class="b" style="left:884.30px;top:334.74px;width:7.70px;height:7.70px;background:#fff;border:1px solid #9ea2a8;box-sizing:border-box;"></div>
<svg class="b" style="left:884.3px;top:334.74px" width="8" height="8" viewBox="0 0 8 8"><path d="M1.7 3.9L3.4 5.6 6.4 2.3" fill="none" stroke="#111" stroke-width="1.7"/></svg>
<div class="b" style="left:4.00px;top:347.30px;width:984.00px;height:17.06px;background:#f1f4f8;"></div>
<div class="b" style="left:4.00px;top:363.86px;width:984.00px;height:1.00px;background:#e7eaee;"></div>
<svg class="b" style="left:15px;top:351.3px" width="8" height="10" viewBox="0 0 8 10"><path d="M3 0.5 C1.6 0.5 0.9 1.4 0.9 2.8 V6.3 C0.9 7.6 2 8.6 3.6 8.6 C5.2 8.6 6.4 7.6 6.4 6.2 C6.4 4.8 5.6 3.9 4.9 3.7 V2.6 C4.9 1.3 4.3 0.5 3 0.5 Z" fill="#8f969f"/><path d="M2.5 2 L3.6 2 L3.6 6.2 L2.5 6.2 Z" fill="#f4f6f8"/></svg>
<svg class="b" style="left:31px;top:350.90000000000003px" width="8" height="9" viewBox="0 0 8 9"><path d="M0.6 0.6h4.4l2.4 2.4v5.4H0.6z" fill="#fff" stroke="#c0c4ca" stroke-width="1"/><path d="M4.8 0.6v2.6h2.6" fill="none" stroke="#c0c4ca" stroke-width="0.8"/></svg>
<div class="t" style="left:48.00px;top:352.06px;font-size:9px;color:#1e1e1e;font-weight:normal;transform:scale(0.85,1.06);-webkit-text-stroke:0.1px currentColor;transform-origin:0 7.62px"></div>
<div class="t" style="left:92.50px;top:352.06px;font-size:9px;color:#1e1e1e;font-weight:normal;transform:scale(0.85,1.06);-webkit-text-stroke:0.1px currentColor;transform-origin:0 7.62px"></div>
<div class="t" style="left:245.50px;top:352.06px;font-size:9px;color:#1e1e1e;font-weight:normal;transform:scale(0.85,1.06);-webkit-text-stroke:0.1px currentColor;transform-origin:0 7.62px">0</div>
<div class="t" style="left:322.50px;top:352.06px;font-size:9px;color:#1e1e1e;font-weight:normal;transform:scale(0.85,1.06);-webkit-text-stroke:0.1px currentColor;transform-origin:0 7.62px">X</div>
<div class="t r" style="right:405.00px;top:352.06px;font-size:9px;color:#1e1e1e;font-weight:normal;transform:scale(0.85,1.06);-webkit-text-stroke:0.1px currentColor;transform-origin:100% 7.62px">249.10</div>
<div class="t" style="left:606.00px;top:352.06px;font-size:9px;color:#1e1e1e;font-weight:normal;transform:scale(0.85,1.06);-webkit-text-stroke:0.1px currentColor;transform-origin:0 7.62px">11/22/2021</div>
<div class="t r" style="right:261.00px;top:352.06px;font-size:9px;color:#1e1e1e;font-weight:normal;transform:scale(0.85,1.06);-webkit-text-stroke:0.1px currentColor;transform-origin:100% 7.62px">132.02</div>
<div class="t r" style="right:196.80px;top:352.06px;font-size:9px;color:#1e1e1e;font-weight:normal;transform:scale(0.85,1.06);-webkit-text-stroke:0.1px currentColor;transform-origin:100% 7.62px">0.00</div>
<div class="b" style="left:884.30px;top:351.80px;width:7.70px;height:7.70px;background:#fff;border:1px solid #9ea2a8;box-sizing:border-box;"></div>
<svg class="b" style="left:884.3px;top:351.8px" width="8" height="8" viewBox="0 0 8 8"><path d="M1.7 3.9L3.4 5.6 6.4 2.3" fill="none" stroke="#111" stroke-width="1.7"/></svg>
<div class="b" style="left:4.00px;top:364.36px;width:984.00px;height:17.06px;background:#ffffff;"></div>
<div class="b" style="left:4.00px;top:380.92px;width:984.00px;height:1.00px;background:#e7eaee;"></div>
<svg class="b" style="left:15px;top:368.36px" width="8" height="10" viewBox="0 0 8 10"><path d="M3 0.5 C1.6 0.5 0.9 1.4 0.9 2.8 V6.3 C0.9 7.6 2 8.6 3.6 8.6 C5.2 8.6 6.4 7.6 6.4 6.2 C6.4 4.8 5.6 3.9 4.9 3.7 V2.6 C4.9 1.3 4.3 0.5 3 0.5 Z" fill="#8f969f"/><path d="M2.5 2 L3.6 2 L3.6 6.2 L2.5 6.2 Z" fill="#f4f6f8"/></svg>
<svg class="b" style="left:31px;top:367.96000000000004px" width="8" height="9" viewBox="0 0 8 9"><path d="M0.6 0.6h4.4l2.4 2.4v5.4H0.6z" fill="#fff" stroke="#c0c4ca" stroke-width="1"/><path d="M4.8 0.6v2.6h2.6" fill="none" stroke="#c0c4ca" stroke-width="0.8"/></svg>
<div class="t" style="left:48.00px;top:369.12px;font-size:9px;color:#1e1e1e;font-weight:normal;transform:scale(0.85,1.06);-webkit-text-stroke:0.1px currentColor;transform-origin:0 7.62px"></div>
<div class="t" style="left:92.50px;top:369.12px;font-size:9px;color:#1e1e1e;font-weight:normal;transform:scale(0.85,1.06);-webkit-text-stroke:0.1px currentColor;transform-origin:0 7.62px"></div>
<div class="t" style="left:245.50px;top:369.12px;font-size:9px;color:#1e1e1e;font-weight:normal;transform:scale(0.85,1.06);-webkit-text-stroke:0.1px currentColor;transform-origin:0 7.62px">0</div>
<div class="t" style="left:322.50px;top:369.12px;font-size:9px;color:#1e1e1e;font-weight:normal;transform:scale(0.85,1.06);-webkit-text-stroke:0.1px currentColor;transform-origin:0 7.62px">X</div>
<div class="t r" style="right:405.00px;top:369.12px;font-size:9px;color:#1e1e1e;font-weight:normal;transform:scale(0.85,1.06);-webkit-text-stroke:0.1px currentColor;transform-origin:100% 7.62px">1.00</div>
<div class="t" style="left:606.00px;top:369.12px;font-size:9px;color:#1e1e1e;font-weight:normal;transform:scale(0.85,1.06);-webkit-text-stroke:0.1px currentColor;transform-origin:0 7.62px">11/22/2021</div>
<div class="t r" style="right:261.00px;top:369.12px;font-size:9px;color:#1e1e1e;font-weight:normal;transform:scale(0.85,1.06);-webkit-text-stroke:0.1px currentColor;transform-origin:100% 7.62px">17.14</div>
<div class="t r" style="right:196.80px;top:369.12px;font-size:9px;color:#1e1e1e;font-weight:normal;transform:scale(0.85,1.06);-webkit-text-stroke:0.1px currentColor;transform-origin:100% 7.62px">0.00</div>
<div class="b" style="left:884.30px;top:368.86px;width:7.70px;height:7.70px;background:#fff;border:1px solid #9ea2a8;box-sizing:border-box;"></div>
<svg class="b" style="left:884.3px;top:368.86px" width="8" height="8" viewBox="0 0 8 8"><path d="M1.7 3.9L3.4 5.6 6.4 2.3" fill="none" stroke="#111" stroke-width="1.7"/></svg>
<div class="b" style="left:4.00px;top:381.42px;width:984.00px;height:17.06px;background:#f1f4f8;"></div>
<div class="b" style="left:4.00px;top:397.98px;width:984.00px;height:1.00px;background:#e7eaee;"></div>
<svg class="b" style="left:15px;top:385.41999999999996px" width="8" height="10" viewBox="0 0 8 10"><path d="M3 0.5 C1.6 0.5 0.9 1.4 0.9 2.8 V6.3 C0.9 7.6 2 8.6 3.6 8.6 C5.2 8.6 6.4 7.6 6.4 6.2 C6.4 4.8 5.6 3.9 4.9 3.7 V2.6 C4.9 1.3 4.3 0.5 3 0.5 Z" fill="#8f969f"/><path d="M2.5 2 L3.6 2 L3.6 6.2 L2.5 6.2 Z" fill="#f4f6f8"/></svg>
<svg class="b" style="left:31px;top:385.02px" width="8" height="9" viewBox="0 0 8 9"><path d="M0.6 0.6h4.4l2.4 2.4v5.4H0.6z" fill="#fff" stroke="#c0c4ca" stroke-width="1"/><path d="M4.8 0.6v2.6h2.6" fill="none" stroke="#c0c4ca" stroke-width="0.8"/></svg>
<div class="t" style="left:48.00px;top:386.17px;font-size:9px;color:#1e1e1e;font-weight:normal;transform:scale(0.85,1.06);-webkit-text-stroke:0.1px currentColor;transform-origin:0 7.62px"></div>
<div class="t" style="left:92.50px;top:386.17px;font-size:9px;color:#1e1e1e;font-weight:normal;transform:scale(0.85,1.06);-webkit-text-stroke:0.1px currentColor;transform-origin:0 7.62px"></div>
<div class="t" style="left:245.50px;top:386.17px;font-size:9px;color:#1e1e1e;font-weight:normal;transform:scale(0.85,1.06);-webkit-text-stroke:0.1px currentColor;transform-origin:0 7.62px">0</div>
<div class="t" style="left:322.50px;top:386.17px;font-size:9px;color:#1e1e1e;font-weight:normal;transform:scale(0.85,1.06);-webkit-text-stroke:0.1px currentColor;transform-origin:0 7.62px">X</div>
<div class="t r" style="right:405.00px;top:386.17px;font-size:9px;color:#1e1e1e;font-weight:normal;transform:scale(0.85,1.06);-webkit-text-stroke:0.1px currentColor;transform-origin:100% 7.62px">1.00</div>
<div class="t" style="left:606.00px;top:386.17px;font-size:9px;color:#1e1e1e;font-weight:normal;transform:scale(0.85,1.06);-webkit-text-stroke:0.1px currentColor;transform-origin:0 7.62px">11/22/2021</div>
<div class="t r" style="right:261.00px;top:386.17px;font-size:9px;color:#1e1e1e;font-weight:normal;transform:scale(0.85,1.06);-webkit-text-stroke:0.1px currentColor;transform-origin:100% 7.62px">400.00</div>
<div class="t r" style="right:196.80px;top:386.17px;font-size:9px;color:#1e1e1e;font-weight:normal;transform:scale(0.85,1.06);-webkit-text-stroke:0.1px currentColor;transform-origin:100% 7.62px">0.00</div>
<div class="b" style="left:884.30px;top:385.92px;width:7.70px;height:7.70px;background:#fff;border:1px solid #9ea2a8;box-sizing:border-box;"></div>
<svg class="b" style="left:884.3px;top:385.91999999999996px" width="8" height="8" viewBox="0 0 8 8"><path d="M1.7 3.9L3.4 5.6 6.4 2.3" fill="none" stroke="#111" stroke-width="1.7"/></svg>
<div class="b" style="left:4.00px;top:398.48px;width:984.00px;height:17.06px;background:#ffffff;"></div>
<div class="b" style="left:4.00px;top:415.04px;width:984.00px;height:1.00px;background:#e7eaee;"></div>
<svg class="b" style="left:15px;top:402.48px" width="8" height="10" viewBox="0 0 8 10"><path d="M3 0.5 C1.6 0.5 0.9 1.4 0.9 2.8 V6.3 C0.9 7.6 2 8.6 3.6 8.6 C5.2 8.6 6.4 7.6 6.4 6.2 C6.4 4.8 5.6 3.9 4.9 3.7 V2.6 C4.9 1.3 4.3 0.5 3 0.5 Z" fill="#8f969f"/><path d="M2.5 2 L3.6 2 L3.6 6.2 L2.5 6.2 Z" fill="#f4f6f8"/></svg>
<svg class="b" style="left:31px;top:402.08000000000004px" width="8" height="9" viewBox="0 0 8 9"><path d="M0.6 0.6h4.4l2.4 2.4v5.4H0.6z" fill="#fff" stroke="#c0c4ca" stroke-width="1"/><path d="M4.8 0.6v2.6h2.6" fill="none" stroke="#c0c4ca" stroke-width="0.8"/></svg>
<div class="t" style="left:48.00px;top:403.24px;font-size:9px;color:#1e1e1e;font-weight:normal;transform:scale(0.85,1.06);-webkit-text-stroke:0.1px currentColor;transform-origin:0 7.62px"></div>
<div class="t" style="left:92.50px;top:403.24px;font-size:9px;color:#1e1e1e;font-weight:normal;transform:scale(0.85,1.06);-webkit-text-stroke:0.1px currentColor;transform-origin:0 7.62px"></div>
<div class="t" style="left:245.50px;top:403.24px;font-size:9px;color:#1e1e1e;font-weight:normal;transform:scale(0.85,1.06);-webkit-text-stroke:0.1px currentColor;transform-origin:0 7.62px">0</div>
<div class="t" style="left:322.50px;top:403.24px;font-size:9px;color:#1e1e1e;font-weight:normal;transform:scale(0.85,1.06);-webkit-text-stroke:0.1px currentColor;transform-origin:0 7.62px">X</div>
<div class="t r" style="right:405.00px;top:403.24px;font-size:9px;color:#1e1e1e;font-weight:normal;transform:scale(0.85,1.06);-webkit-text-stroke:0.1px currentColor;transform-origin:100% 7.62px">-1.00</div>
<div class="t" style="left:606.00px;top:403.24px;font-size:9px;color:#1e1e1e;font-weight:normal;transform:scale(0.85,1.06);-webkit-text-stroke:0.1px currentColor;transform-origin:0 7.62px">11/22/2021</div>
<div class="t r" style="right:261.00px;top:403.24px;font-size:9px;color:#1e1e1e;font-weight:normal;transform:scale(0.85,1.06);-webkit-text-stroke:0.1px currentColor;transform-origin:100% 7.62px">0.00</div>
<div class="t r" style="right:196.80px;top:403.24px;font-size:9px;color:#1e1e1e;font-weight:normal;transform:scale(0.85,1.06);-webkit-text-stroke:0.1px currentColor;transform-origin:100% 7.62px">2,348.07</div>
<div class="b" style="left:884.30px;top:402.98px;width:7.70px;height:7.70px;background:#fff;border:1px solid #bfc3c8;box-sizing:border-box;"></div>
<div class="b" style="left:4.00px;top:415.54px;width:984.00px;height:17.06px;background:#f1f4f8;"></div>
<div class="b" style="left:4.00px;top:432.10px;width:984.00px;height:1.00px;background:#e7eaee;"></div>
<svg class="b" style="left:15px;top:419.53999999999996px" width="8" height="10" viewBox="0 0 8 10"><path d="M3 0.5 C1.6 0.5 0.9 1.4 0.9 2.8 V6.3 C0.9 7.6 2 8.6 3.6 8.6 C5.2 8.6 6.4 7.6 6.4 6.2 C6.4 4.8 5.6 3.9 4.9 3.7 V2.6 C4.9 1.3 4.3 0.5 3 0.5 Z" fill="#8f969f"/><path d="M2.5 2 L3.6 2 L3.6 6.2 L2.5 6.2 Z" fill="#f4f6f8"/></svg>
<svg class="b" style="left:31px;top:419.14px" width="8" height="9" viewBox="0 0 8 9"><path d="M0.6 0.6h4.4l2.4 2.4v5.4H0.6z" fill="#fff" stroke="#c0c4ca" stroke-width="1"/><path d="M4.8 0.6v2.6h2.6" fill="none" stroke="#c0c4ca" stroke-width="0.8"/></svg>
<div class="t" style="left:48.00px;top:420.29px;font-size:9px;color:#1e1e1e;font-weight:normal;transform:scale(0.85,1.06);-webkit-text-stroke:0.1px currentColor;transform-origin:0 7.62px">2710</div>
<div class="t" style="left:92.50px;top:420.29px;font-size:9px;color:#1e1e1e;font-weight:normal;transform:scale(0.85,1.06);-webkit-text-stroke:0.1px currentColor;transform-origin:0 7.62px">Inngående merverdiavgift</div>
<div class="t" style="left:245.50px;top:420.29px;font-size:9px;color:#1e1e1e;font-weight:normal;transform:scale(0.85,1.06);-webkit-text-stroke:0.1px currentColor;transform-origin:0 7.62px">0</div>
<div class="t" style="left:322.50px;top:420.29px;font-size:9px;color:#1e1e1e;font-weight:normal;transform:scale(0.85,1.06);-webkit-text-stroke:0.1px currentColor;transform-origin:0 7.62px">X</div>
<div class="t" style="left:438.00px;top:420.29px;font-size:9px;color:#1e1e1e;font-weight:normal;transform:scale(0.85,1.06);-webkit-text-stroke:0.1px currentColor;transform-origin:0 7.62px">0</div>
<div class="t r" style="right:405.00px;top:420.29px;font-size:9px;color:#1e1e1e;font-weight:normal;transform:scale(0.85,1.06);-webkit-text-stroke:0.1px currentColor;transform-origin:100% 7.62px">0.00</div>
<div class="t" style="left:606.00px;top:420.29px;font-size:9px;color:#1e1e1e;font-weight:normal;transform:scale(0.85,1.06);-webkit-text-stroke:0.1px currentColor;transform-origin:0 7.62px">11/22/2021</div>
<div class="t r" style="right:261.00px;top:420.29px;font-size:9px;color:#1e1e1e;font-weight:normal;transform:scale(0.85,1.06);-webkit-text-stroke:0.1px currentColor;transform-origin:100% 7.62px">0.00</div>
<div class="t r" style="right:196.80px;top:420.29px;font-size:9px;color:#1e1e1e;font-weight:normal;transform:scale(0.85,1.06);-webkit-text-stroke:0.1px currentColor;transform-origin:100% 7.62px">0.00</div>
<div class="b" style="left:884.30px;top:420.04px;width:7.70px;height:7.70px;background:#fff;border:1px solid #bfc3c8;box-sizing:border-box;"></div>
<div class="b" style="left:4.00px;top:432.60px;width:984.00px;height:17.06px;background:#ffffff;"></div>
<div class="b" style="left:4.00px;top:449.16px;width:984.00px;height:1.00px;background:#e7eaee;"></div>
<svg class="b" style="left:15px;top:436.6px" width="8" height="10" viewBox="0 0 8 10"><path d="M3 0.5 C1.6 0.5 0.9 1.4 0.9 2.8 V6.3 C0.9 7.6 2 8.6 3.6 8.6 C5.2 8.6 6.4 7.6 6.4 6.2 C6.4 4.8 5.6 3.9 4.9 3.7 V2.6 C4.9 1.3 4.3 0.5 3 0.5 Z" fill="#8f969f"/><path d="M2.5 2 L3.6 2 L3.6 6.2 L2.5 6.2 Z" fill="#f4f6f8"/></svg>
<svg class="b" style="left:31px;top:436.20000000000005px" width="8" height="9" viewBox="0 0 8 9"><path d="M0.6 0.6h4.4l2.4 2.4v5.4H0.6z" fill="#fff" stroke="#c0c4ca" stroke-width="1"/><path d="M4.8 0.6v2.6h2.6" fill="none" stroke="#c0c4ca" stroke-width="0.8"/></svg>
<div class="t" style="left:48.00px;top:437.36px;font-size:9px;color:#1e1e1e;font-weight:normal;transform:scale(0.85,1.06);-webkit-text-stroke:0.1px currentColor;transform-origin:0 7.62px">2711</div>
<div class="t" style="left:92.50px;top:437.36px;font-size:9px;color:#1e1e1e;font-weight:normal;transform:scale(0.85,1.06);-webkit-text-stroke:0.1px currentColor;transform-origin:0 7.62px">Inngående merverdiavgift høy sats</div>
<div class="t" style="left:245.50px;top:437.36px;font-size:9px;color:#1e1e1e;font-weight:normal;transform:scale(0.85,1.06);-webkit-text-stroke:0.1px currentColor;transform-origin:0 7.62px">0</div>
<div class="t" style="left:322.50px;top:437.36px;font-size:9px;color:#1e1e1e;font-weight:normal;transform:scale(0.85,1.06);-webkit-text-stroke:0.1px currentColor;transform-origin:0 7.62px">X</div>
<div class="t" style="left:438.00px;top:437.36px;font-size:9px;color:#1e1e1e;font-weight:normal;transform:scale(0.85,1.06);-webkit-text-stroke:0.1px currentColor;transform-origin:0 7.62px">14</div>
<div class="t r" style="right:405.00px;top:437.36px;font-size:9px;color:#1e1e1e;font-weight:normal;transform:scale(0.85,1.06);-webkit-text-stroke:0.1px currentColor;transform-origin:100% 7.62px">0.00</div>
<div class="t" style="left:606.00px;top:437.36px;font-size:9px;color:#1e1e1e;font-weight:normal;transform:scale(0.85,1.06);-webkit-text-stroke:0.1px currentColor;transform-origin:0 7.62px">11/22/2021</div>
<div class="t r" style="right:261.00px;top:437.36px;font-size:9px;color:#1e1e1e;font-weight:normal;transform:scale(0.85,1.06);-webkit-text-stroke:0.1px currentColor;transform-origin:100% 7.62px">106.00</div>
<div class="t r" style="right:196.80px;top:437.36px;font-size:9px;color:#1e1e1e;font-weight:normal;transform:scale(0.85,1.06);-webkit-text-stroke:0.1px currentColor;transform-origin:100% 7.62px">0.00</div>
<div class="b" style="left:884.30px;top:437.10px;width:7.70px;height:7.70px;background:#fff;border:1px solid #bfc3c8;box-sizing:border-box;"></div>
<div class="b" style="left:4.00px;top:449.66px;width:984.00px;height:17.06px;background:#f1f4f8;"></div>
<div class="b" style="left:4.00px;top:466.22px;width:984.00px;height:1.00px;background:#e7eaee;"></div>
<svg class="b" style="left:15px;top:453.65999999999997px" width="8" height="10" viewBox="0 0 8 10"><path d="M3 0.5 C1.6 0.5 0.9 1.4 0.9 2.8 V6.3 C0.9 7.6 2 8.6 3.6 8.6 C5.2 8.6 6.4 7.6 6.4 6.2 C6.4 4.8 5.6 3.9 4.9 3.7 V2.6 C4.9 1.3 4.3 0.5 3 0.5 Z" fill="#8f969f"/><path d="M2.5 2 L3.6 2 L3.6 6.2 L2.5 6.2 Z" fill="#f4f6f8"/></svg>
<svg class="b" style="left:31px;top:453.26px" width="8" height="9" viewBox="0 0 8 9"><path d="M0.6 0.6h4.4l2.4 2.4v5.4H0.6z" fill="#fff" stroke="#c0c4ca" stroke-width="1"/><path d="M4.8 0.6v2.6h2.6" fill="none" stroke="#c0c4ca" stroke-width="0.8"/></svg>
<div class="t" style="left:48.00px;top:454.41px;font-size:9px;color:#1e1e1e;font-weight:normal;transform:scale(0.85,1.06);-webkit-text-stroke:0.1px currentColor;transform-origin:0 7.62px">2714</div>
<div class="t" style="left:92.50px;top:454.41px;font-size:9px;color:#1e1e1e;font-weight:normal;transform:scale(0.85,1.06);-webkit-text-stroke:0.1px currentColor;transform-origin:0 7.62px">Inngående merverdiavgift lav sats</div>
<div class="t" style="left:245.50px;top:454.41px;font-size:9px;color:#1e1e1e;font-weight:normal;transform:scale(0.85,1.06);-webkit-text-stroke:0.1px currentColor;transform-origin:0 7.62px">0</div>
<div class="t" style="left:322.50px;top:454.41px;font-size:9px;color:#1e1e1e;font-weight:normal;transform:scale(0.85,1.06);-webkit-text-stroke:0.1px currentColor;transform-origin:0 7.62px">X</div>
<div class="t" style="left:438.00px;top:454.41px;font-size:9px;color:#1e1e1e;font-weight:normal;transform:scale(0.85,1.06);-webkit-text-stroke:0.1px currentColor;transform-origin:0 7.62px">16</div>
<div class="t r" style="right:405.00px;top:454.41px;font-size:9px;color:#1e1e1e;font-weight:normal;transform:scale(0.85,1.06);-webkit-text-stroke:0.1px currentColor;transform-origin:100% 7.62px">0.00</div>
<div class="t" style="left:606.00px;top:454.41px;font-size:9px;color:#1e1e1e;font-weight:normal;transform:scale(0.85,1.06);-webkit-text-stroke:0.1px currentColor;transform-origin:0 7.62px">11/22/2021</div>
<div class="t r" style="right:261.00px;top:454.41px;font-size:9px;color:#1e1e1e;font-weight:normal;transform:scale(0.85,1.06);-webkit-text-stroke:0.1px currentColor;transform-origin:100% 7.62px">2.06</div>
<div class="t r" style="right:196.80px;top:454.41px;font-size:9px;color:#1e1e1e;font-weight:normal;transform:scale(0.85,1.06);-webkit-text-stroke:0.1px currentColor;transform-origin:100% 7.62px">0.00</div>
<div class="b" style="left:884.30px;top:454.16px;width:7.70px;height:7.70px;background:#fff;border:1px solid #bfc3c8;box-sizing:border-box;"></div>
<div class="b" style="left:4.00px;top:262.00px;width:1.00px;height:204.72px;background:#e3e5e8;"></div>
<div class="b" style="left:8.00px;top:262.00px;width:1.00px;height:204.72px;background:#eceef1;"></div>
<div class="b" style="left:42.00px;top:279.00px;width:170.50px;height:133.00px;background:#687b90;"></div>
<div class="b" style="left:432.00px;top:257.75px;width:119.00px;height:154.25px;background:#687b90;"></div>
<div class="b" style="left:808.70px;top:263.60px;width:57.30px;height:206.40px;background:#687b90;"></div>
</body></html>
